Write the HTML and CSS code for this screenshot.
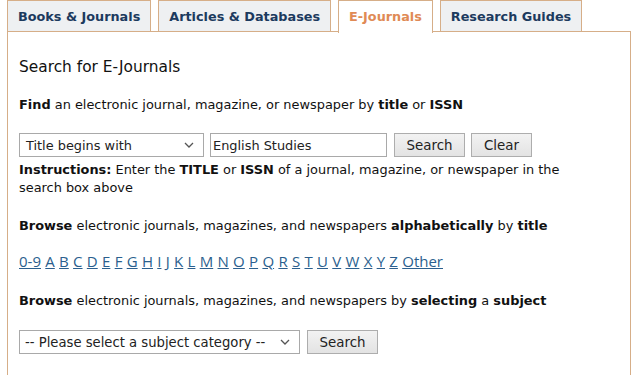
FILE: index.html
```html
<!DOCTYPE html>
<html>

<head>
  <meta charset="utf-8">
  <title>E-Journals</title>
  <link rel="stylesheet" href="styles.css">
</head>

<body>
  <ul class="tabs">
    <li class="tab"><a href="#">Books &amp; Journals</a></li>
    <li class="tab"><a href="#">Articles &amp; Databases</a></li>
    <li class="tab active"><a href="#">E-Journals</a></li>
    <li class="tab"><a href="#">Research Guides</a></li>
  </ul>

  <div class="panel">
    <h2>Search for E-Journals</h2>

    <p class="find"><b>Find</b> an electronic journal, magazine, or newspaper by <b>title</b> or <b>ISSN</b></p>

    <form class="search-row title-row">
      <span class="select type-select">Title begins with<svg class="chev" width="10" height="6" viewBox="0 0 10 6"><path d="M1 1l4 4 4-4" fill="none" stroke="#555" stroke-width="1.3"/></svg></span>
      <input class="text-input" type="text" value="English Studies">
      <button type="button" class="btn search-btn">Search</button>
      <button type="button" class="btn clear-btn">Clear</button>
    </form>
    <p class="instructions"><b>Instructions:</b> Enter the <b>TITLE</b> or <b>ISSN</b> of a journal, magazine, or newspaper in the search box above</p>

    <p class="browse-alpha"><b>Browse</b> electronic journals, magazines, and newspapers <b>alphabetically</b> by <b>title</b></p>

    <div class="alpha">
      <a href="#">0-9</a> <a href="#">A</a> <a href="#">B</a> <a href="#">C</a> <a href="#">D</a> <a href="#">E</a> <a href="#">F</a> <a href="#">G</a> <a href="#">H</a> <a href="#">I</a> <a href="#">J</a> <a href="#">K</a> <a href="#">L</a> <a href="#">M</a> <a href="#">N</a> <a href="#">O</a> <a href="#">P</a> <a href="#">Q</a> <a href="#">R</a> <a href="#">S</a> <a href="#">T</a> <a href="#">U</a> <a href="#">V</a> <a href="#">W</a> <a href="#">X</a> <a href="#">Y</a> <a href="#">Z</a> <a href="#">Other</a>
    </div>

    <p class="browse-subject"><b>Browse</b> electronic journals, magazines, and newspapers by <b>selecting</b> a <b>subject</b></p>

    <form class="search-row subject-row">
      <span class="select subject-select">-- Please select a subject category --<svg class="chev" width="10" height="6" viewBox="0 0 10 6"><path d="M1 1l4 4 4-4" fill="none" stroke="#555" stroke-width="1.3"/></svg></span>
      <button type="button" class="btn search-btn">Search</button>
    </form>
  </div>
</body>

</html>
```

FILE: styles.css
```css
html {
  --border-tan: #d6ae88;
  --tab-bg: #eef0f2;
  --tab-text: #1c3a5e;
  --active-text: #e08a55;
}

body {
  margin: 0;
  padding: 0 10px 0 7px;
  font-family: "DejaVu Sans", Verdana, sans-serif;
  font-size: 12.9px;
  color: #111;
  background: #fff;
}

.tabs {
  display: flex;
  gap: 7px;
  list-style: none;
  margin: 0;
  padding: 0;
  height: 31px;
}

.tab {
  border: 1px solid var(--border-tan);
  border-bottom: none;
  background: var(--tab-bg);
  height: 30px;
  position: relative;
}

.tab a {
  display: block;
  padding: 0 10px;
  line-height: 31px;
  font-weight: bold;
  font-size: 12.8px;
  color: var(--tab-text);
  text-decoration: none;
}

.tab.active {
  background: #fff;
  height: 32px;
  z-index: 1;
}

.tab.active a {
  color: var(--active-text);
}

.panel {
  border: 1px solid var(--border-tan);
  border-bottom: none;
  padding: 22px 11px 40px 11px;
  width: 600px;
  height: 400px;
}

h2 {
  margin: 0 0 16px;
  font-size: 15.4px;
  font-weight: normal;
  line-height: 26px;
}

p {
  margin: 0;
  line-height: 18px;
}

.find {
  margin-bottom: 19px;
}

.search-row {
  display: flex;
  gap: 6px;
  align-items: center;
  margin: 0;
}

.title-row {
  margin-bottom: 4px;
}

.select {
  display: flex;
  align-items: center;
  justify-content: space-between;
  box-sizing: border-box;
  height: 24px;
  border: 1px solid #a9a9a9;
  padding: 0 9px 0 6px;
  background: #fff;
  color: #222;
}

.type-select {
  width: 185px;
}

.subject-select {
  width: 281px;
  font-size: 13.2px;
  padding-left: 5px;
}

.text-input {
  box-sizing: border-box;
  width: 177px;
  height: 24px;
  margin: 0;
  border: 1px solid #a9a9a9;
  padding: 0 2px;
  font: inherit;
  color: #222;
}

.btn {
  box-sizing: border-box;
  height: 24px;
  margin: 0;
  padding: 0 8px;
  border: 1px solid #adadad;
  background: linear-gradient(#f2f2f2, #e3e3e3);
  font: inherit;
  font-size: 13.4px;
  color: #222;
}

.search-btn {
  width: 71px;
  margin-left: 1px;
}

.clear-btn {
  width: 61px;
}

.instructions {
  max-width: 565px;
  margin-bottom: 20px;
}

.browse-alpha {
  margin-bottom: 16px;
}

.alpha {
  font-family: "Open Sans", sans-serif;
  font-size: 15px;
  line-height: 20px;
  margin-bottom: 21px;
  word-spacing: 0.4px;
}

.alpha a {
  color: #2b5f8e;
  text-decoration: underline;
}

.browse-subject {
  margin-bottom: 20px;
}
```
